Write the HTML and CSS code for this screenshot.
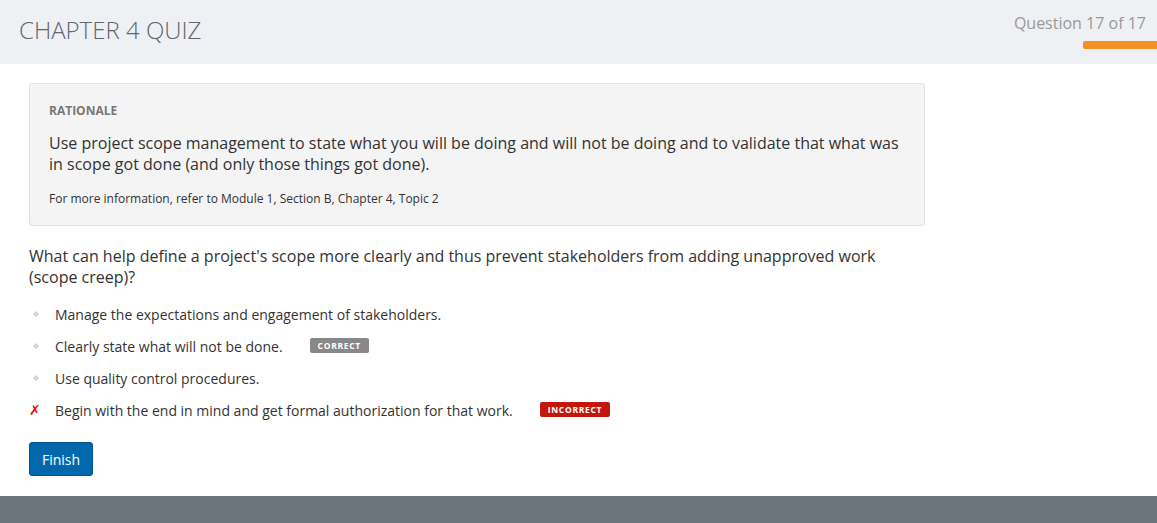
FILE: index.html
```html
<!DOCTYPE html>
<html>
<head>
<meta charset="utf-8">
<link rel="stylesheet" href="styles.css">
</head>
<body>
<header class="top">
  <h1 class="title">CHAPTER 4 QUIZ</h1>
  <div class="progress">
    <div class="progress-text">Question 17 of 17</div>
    <div class="progress-bar"></div>
  </div>
</header>
<main class="content">
  <section class="rationale">
    <div class="rationale-label">RATIONALE</div>
    <p class="rationale-text">Use project scope management to state what you will be doing and will not be doing and to validate that what was in scope got done (and only those things got done).</p>
    <p class="rationale-ref">For more information, refer to Module 1, Section B, Chapter 4, Topic 2</p>
  </section>
  <p class="question">What can help define a project's scope more clearly and thus prevent stakeholders from adding unapproved work (scope creep)?</p>
  <ul class="options">
    <li class="option"><span class="mark"><span class="diamond"></span></span><span class="opt-text">Manage the expectations and engagement of stakeholders.</span></li>
    <li class="option"><span class="mark"><span class="diamond"></span></span><span class="opt-text">Clearly state what will not be done.</span><span class="badge badge-correct">CORRECT</span></li>
    <li class="option"><span class="mark"><span class="diamond"></span></span><span class="opt-text">Use quality control procedures.</span></li>
    <li class="option"><span class="mark mark-x">✗</span><span class="opt-text">Begin with the end in mind and get formal authorization for that work.</span><span class="badge badge-incorrect">INCORRECT</span></li>
  </ul>
  <button class="finish">Finish</button>
</main>
<footer class="bottom"></footer>
</body>
</html>
```
FILE: styles.css
```css
* { box-sizing: border-box; }
html, body { margin: 0; padding: 0; }
body {
  font-family: "Open Sans", "Liberation Sans", sans-serif;
  color: #333;
  background: #fff;
  width: 1157px;
  height: 523px;
  overflow: hidden;
  display: flex;
  flex-direction: column;
}
.top {
  height: 64px;
  background: #eff0f4;
  display: flex;
  justify-content: space-between;
  align-items: flex-start;
  flex-shrink: 0;
}
.title {
  margin: 13px 0 0 19px;
  font-weight: 300;
  font-size: 24px;
  line-height: 34px;
  color: #5d6670;
  letter-spacing: 0;
}
.progress {
  display: flex;
  flex-direction: column;
  align-items: flex-end;
  padding-top: 12px;
}
.progress-text {
  font-size: 16px;
  line-height: 22px;
  color: #999;
  margin-right: 11px;
}
.progress-bar {
  width: 74px;
  height: 8px;
  background: #f39022;
  border-radius: 2px 0 0 2px;
  margin-top: 7px;
}
.content {
  flex: 1;
  padding: 19px 0 0 29px;
}
.rationale {
  width: 896px;
  background: #f4f4f4;
  border: 1px solid #e2e2e2;
  border-radius: 3px;
  padding: 18px 19px 18px 19px;
}
.rationale-label {
  font-size: 12px;
  font-weight: 700;
  color: #777;
  line-height: 18px;
}
.rationale-text {
  margin: 13px 0 0;
  font-size: 16px;
  line-height: 21px;
  color: #333;
}
.rationale-ref {
  margin: 15px 0 0;
  font-size: 12px;
  line-height: 17px;
  color: #333;
}
.question {
  margin: 20px 0 0;
  width: 880px;
  font-size: 16px;
  line-height: 21px;
  color: #333;
}
.options {
  list-style: none;
  margin: 10px 0 0;
  padding: 0;
}
.option {
  display: flex;
  align-items: center;
  height: 32px;
  font-size: 14px;
  color: #333;
}
.mark {
  width: 26px;
  display: flex;
  align-items: center;
  padding-left: 4px;
}
.diamond {
  width: 4px;
  height: 4px;
  background: #e8e8e8;
  border: 1px solid #c4c4c4;
  transform: rotate(45deg);
  margin-left: 1px;
}
.mark-x {
  color: #e8100c;
  font-size: 14px;
  font-weight: 700;
  padding-left: 0;
  font-family: "DejaVu Sans", sans-serif;
}
.badge {
  display: inline-block;
  font-size: 8.5px;
  font-weight: 700;
  color: #fff;
  letter-spacing: 0.7px;
  line-height: 15px;
  height: 15px;
  padding: 0 8px;
  border-radius: 2px;
  margin-left: 27px;
  margin-top: -2px;
}
.badge-correct { background: #888; }
.badge-incorrect { background: #c4170c; }
.finish {
  margin-top: 16px;
  font-family: inherit;
  font-size: 14px;
  color: #fff;
  background: #0268ac;
  border: 1px solid #02558d;
  border-radius: 3px;
  width: 64px;
  height: 34px;
  padding: 0;
  cursor: pointer;
}
.bottom {
  height: 27px;
  background: #6b737b;
  flex-shrink: 0;
}
```
